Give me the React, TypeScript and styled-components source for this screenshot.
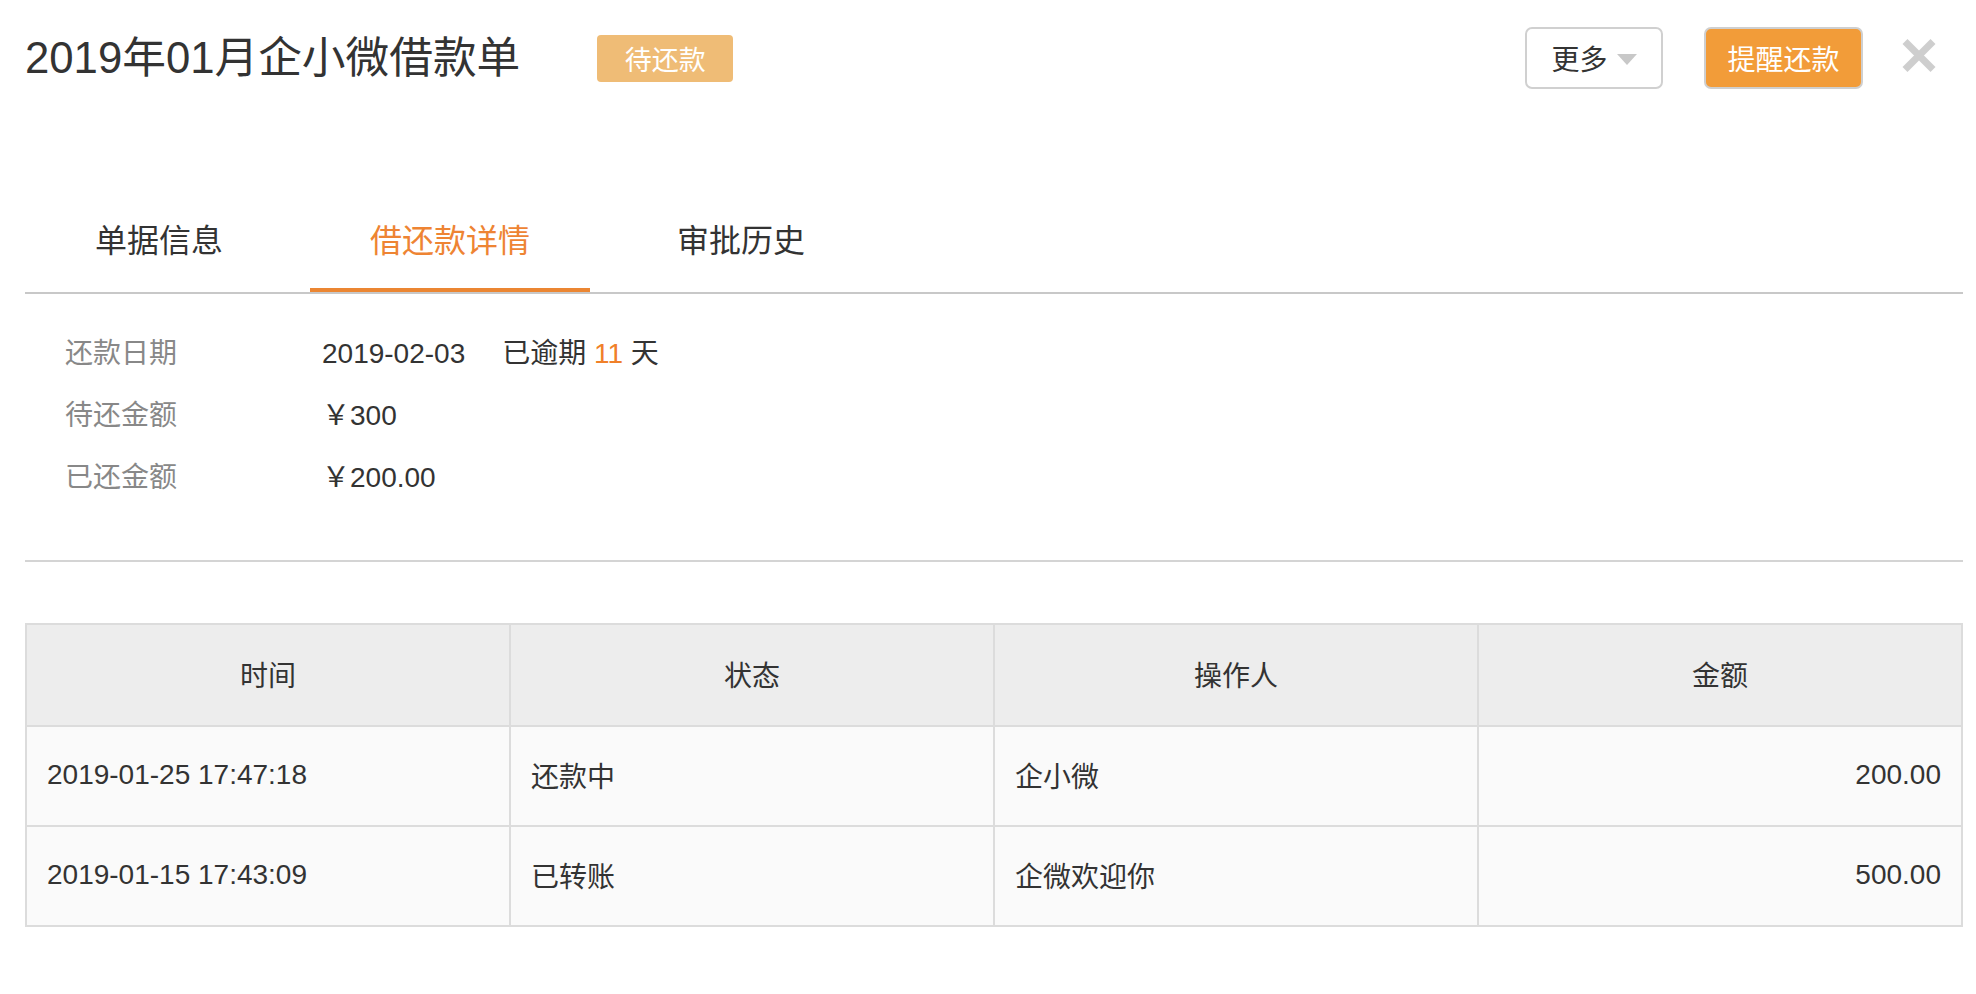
import React from 'react';
import styled, { createGlobalStyle } from 'styled-components';

const GlobalStyle = createGlobalStyle`
  html, body {
    margin: 0;
    padding: 0;
    background: #fff;
  }
  body {
    font-family: "Liberation Sans", "Noto Sans CJK SC", sans-serif;
    color: #333;
  }
`;

const tabs = ['单据信息', '借还款详情', '审批历史'];

const records = [
  { time: '2019-01-25 17:47:18', status: '还款中', operator: '企小微', amount: '200.00' },
  { time: '2019-01-15 17:43:09', status: '已转账', operator: '企微欢迎你', amount: '500.00' },
];

/**
 * Loan bill detail - repayment tab
 */
const App: React.FC = () => {
  return (
    <Page>
      <GlobalStyle />
      <Header>
        <TitleGroup>
          <Title>2019年01月企小微借款单</Title>
          <StatusBadge>待还款</StatusBadge>
        </TitleGroup>
        <Actions>
          <MoreButton>
            更多
            <Caret />
          </MoreButton>
          <PrimaryButton>提醒还款</PrimaryButton>
          <CloseButton aria-label="关闭">
            <svg width="36" height="35" viewBox="0 0 36 35">
              <path d="M4 3.5 L32 31.5 M32 3.5 L4 31.5" stroke="#cecece" strokeWidth="7" />
            </svg>
          </CloseButton>
        </Actions>
      </Header>

      <TabList>
        {tabs.map((t, i) => (
          <Tab key={t} $active={i === 1}>
            {t}
          </Tab>
        ))}
      </TabList>

      <InfoSection>
        <InfoRow>
          <InfoLabel>还款日期</InfoLabel>
          <InfoValue>
            2019-02-03
            <Overdue>
              已逾期 <Highlight>11</Highlight> 天
            </Overdue>
          </InfoValue>
        </InfoRow>
        <InfoRow>
          <InfoLabel>待还金额</InfoLabel>
          <InfoValue>￥300</InfoValue>
        </InfoRow>
        <InfoRow>
          <InfoLabel>已还金额</InfoLabel>
          <InfoValue>￥200.00</InfoValue>
        </InfoRow>
      </InfoSection>

      <Table>
        <thead>
          <tr>
            <Th>时间</Th>
            <Th>状态</Th>
            <Th>操作人</Th>
            <Th>金额</Th>
          </tr>
        </thead>
        <tbody>
          {records.map((r) => (
            <tr key={r.time}>
              <Td>{r.time}</Td>
              <Td>{r.status}</Td>
              <Td>{r.operator}</Td>
              <Td $align="right">{r.amount}</Td>
            </tr>
          ))}
        </tbody>
      </Table>
    </Page>
  );
};

// Styled components
const Page = styled.div`
  padding: 0 13px 40px 25px;
`;

const Header = styled.header`
  display: flex;
  align-items: center;
  justify-content: space-between;
  height: 62px;
  padding-top: 27px;
  padding-right: 26px;
`;

const TitleGroup = styled.div`
  display: flex;
  align-items: center;
  gap: 77px;
`;

const Title = styled.h1`
  margin: 0;
  font-size: 43.7px;
  font-weight: 400;
  color: #333;
  line-height: 1;
`;

const StatusBadge = styled.span`
  display: inline-flex;
  align-items: center;
  justify-content: center;
  width: 136px;
  height: 47px;
  border-radius: 4px;
  background: #efbc76;
  color: #fff;
  font-size: 27px;
`;

const Actions = styled.div`
  display: flex;
  align-items: center;
`;

const MoreButton = styled.button`
  display: inline-flex;
  align-items: center;
  justify-content: center;
  gap: 9px;
  width: 138px;
  height: 62px;
  border: 2px solid #d0d0d0;
  border-radius: 7px;
  background: #fff;
  color: #333;
  font-family: inherit;
  font-size: 28px;
  padding: 0;
`;

const Caret = styled.span`
  width: 0;
  height: 0;
  border-left: 10px solid transparent;
  border-right: 10px solid transparent;
  border-top: 11px solid #c8c8c8;
  margin-top: 2px;
`;

const PrimaryButton = styled.button`
  margin-left: 41px;
  width: 159px;
  height: 62px;
  border: 2px solid #cfcfcf;
  border-radius: 7px;
  background: #f29c39;
  color: #fff;
  font-family: inherit;
  font-size: 28px;
  padding: 0;
`;

const CloseButton = styled.button`
  margin-left: 38px;
  margin-top: -6px;
  border: 0;
  background: none;
  padding: 0;
  display: flex;
`;

const TabList = styled.nav`
  display: flex;
  gap: 11px;
  margin-top: 130px;
  border-bottom: 2px solid #c8c8c8;
  & > :first-child {
    margin-left: -6px;
  }
`;

const Tab = styled.div<{ $active?: boolean }>`
  width: 280px;
  text-align: center;
  font-size: 32px;
  line-height: 44px;
  padding-bottom: 25px;
  color: ${(p) => (p.$active ? '#ee8433' : '#333')};
  border-bottom: 4px solid ${(p) => (p.$active ? '#eb8632' : 'transparent')};
`;

const InfoSection = styled.section`
  padding: 26px 0 54px 40px;
  border-bottom: 2px solid #d4d4d4;
`;

const InfoRow = styled.div`
  display: flex;
  height: 62px;
  align-items: center;
  font-size: 28px;
`;

const InfoLabel = styled.div`
  width: 257px;
  color: #888;
`;

const InfoValue = styled.div`
  color: #333;
`;

const Overdue = styled.span`
  margin-left: 37px;
`;

const Highlight = styled.span`
  color: #f08029;
`;

const Table = styled.table`
  width: 100%;
  margin-top: 61px;
  border-collapse: collapse;
  table-layout: fixed;
  font-size: 28px;
  color: #333;
`;

const Th = styled.th`
  height: 97px;
  padding: 0 0 3px;
  background: #ededed;
  border: 2px solid #dcdcdc;
  font-weight: 400;
  text-align: center;
`;

const Td = styled.td<{ $align?: 'left' | 'right' }>`
  height: 96px;
  padding: 0 20px 2px;
  background: #fafafa;
  border: 2px solid #dcdcdc;
  text-align: ${(p) => p.$align || 'left'};
`;

export default App;
